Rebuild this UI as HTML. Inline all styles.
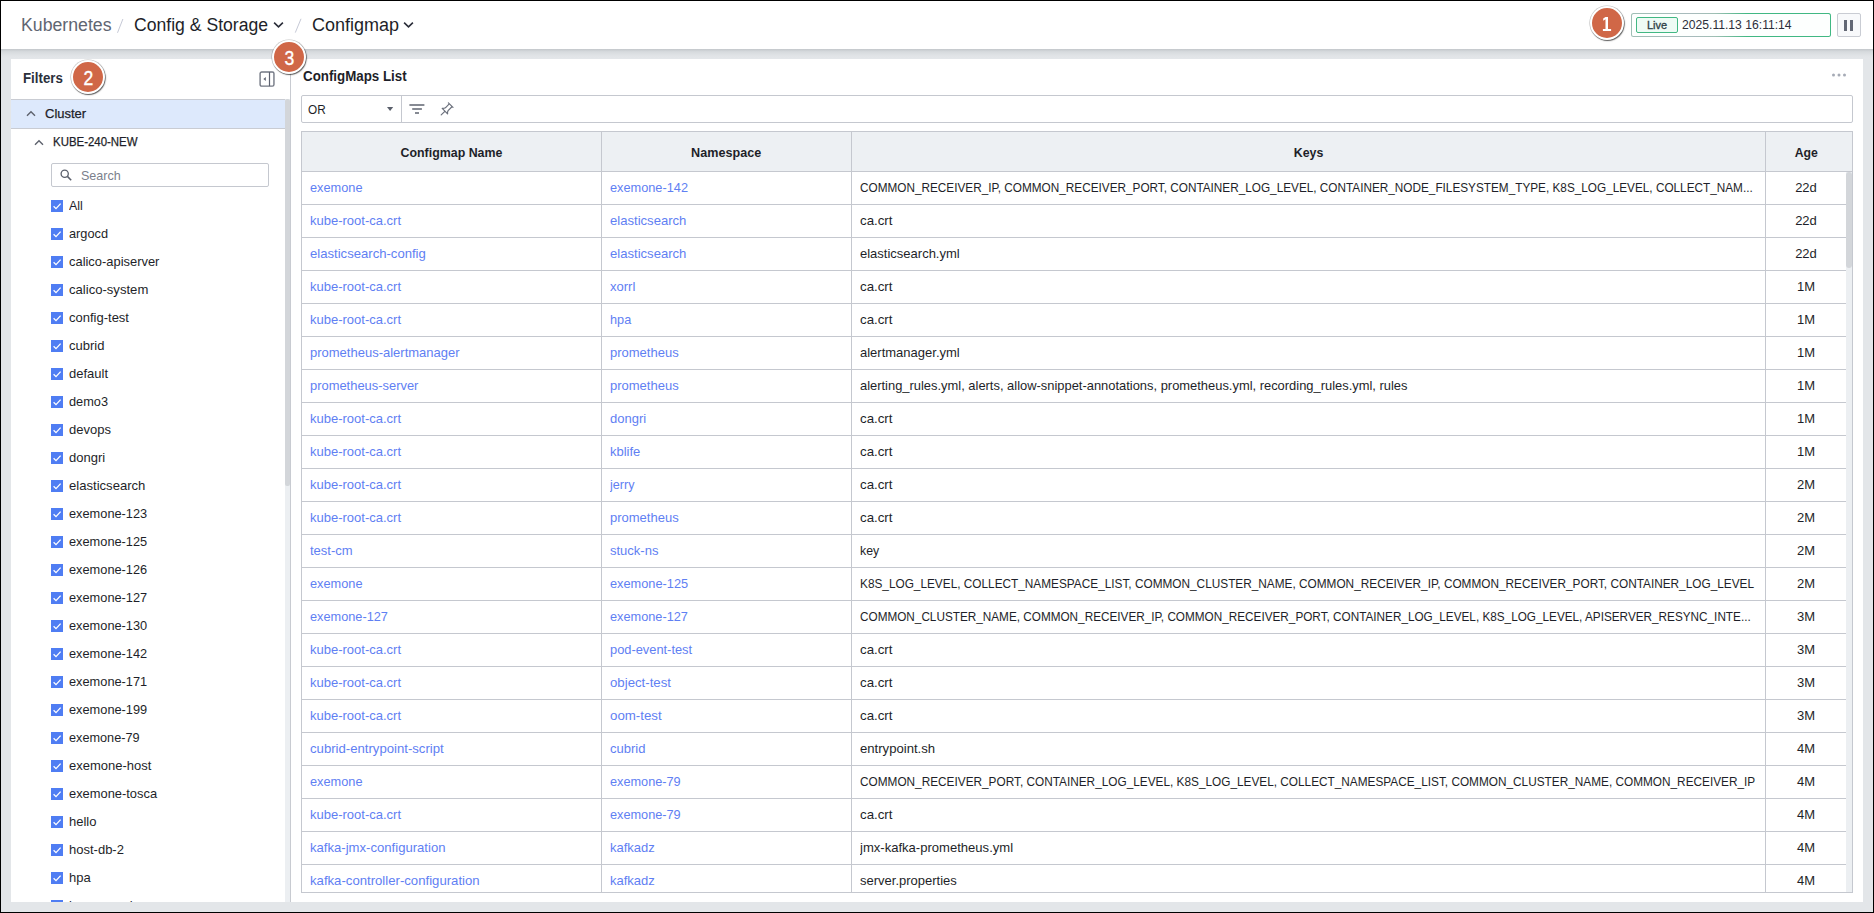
<!DOCTYPE html>
<html>
<head>
<meta charset="utf-8">
<title>Configmap</title>
<style>
*{box-sizing:border-box;margin:0;padding:0}
html,body{width:1874px;height:913px;overflow:hidden;background:#000}
body{font-family:"Liberation Sans",sans-serif;color:#1e1f29;position:relative}
.abs{position:absolute}
#page{left:1px;top:1px;width:1872px;height:911px;background:#e3e6e9;overflow:hidden}
#hdr{left:0;top:0;width:1872px;height:48px;background:#fff}
#hshadow{left:0;top:48px;width:1872px;height:9px;background:linear-gradient(#c3c7cb 0,#d6dadd 30%,#e0e3e6 70%,#e3e6e9 100%)}
.bc{top:0;height:48px;line-height:48px;font-size:18px;white-space:nowrap}
.bc.g{color:#5f6672}
.bc.sl{color:#c3c6d4}
#panel{left:10px;top:58px;width:1852px;height:843px;background:#fff;overflow:hidden}
.badge{width:34px;height:34px;border-radius:50%;background:#d06747;border:2px solid #fff;box-shadow:0 0 0 .6px rgba(0,0,0,.22),0.7px 1px 1.2px rgba(0,0,0,.6);color:#fff;font-size:19.5px;font-weight:400;text-align:center;line-height:33px;z-index:5;-webkit-text-stroke:0.35px #fff}
.badge span{display:inline-block;transform:scaleX(.9)}
.badge svg{position:absolute;left:-2px;top:-2px}
/* live */
#live{left:1630px;top:12px;width:200px;height:24px;border-radius:2.5px;background:linear-gradient(90deg,#9fbeb5 0,#a8bbbc 30%,#9fbfb4 42%,#41b883 58%)}
#livebg{left:1px;top:1px;width:198px;height:22px;border-radius:1.5px;background:#fdfffe}
#livetag{left:5px;top:4px;width:42px;height:16px;border:1px solid #41b883;border-radius:2px;background:#eefbf5;font-size:11px;line-height:14px;text-align:center;color:#2d3f46;-webkit-text-stroke:0.3px #2d3f46}
#livetime{left:51px;top:1px;height:22px;line-height:22px;font-size:12px;color:#2b2e3a;white-space:nowrap}
#pause{left:1836px;top:12px;width:24px;height:24px;border:1px solid #c9ccd3;border-radius:2px;background:#f8f9fb}
#pause i{position:absolute;top:6px;width:3px;height:11px;background:#636875}
/* left */
#filters{left:12px;top:10px;font-size:14px;font-weight:bold;line-height:18px;color:#2b303b}
#cluster{left:0;top:40px;width:274px;height:30px;background:#ddE9fc;border-top:1px solid #c9ccd3;border-bottom:1px solid #c9ccd3}
#cluster span{position:absolute;left:34px;top:0;line-height:28px;font-size:13px;color:#1e1f29;-webkit-text-stroke:0.25px #1e1f29}
#kube{left:42px;top:74px;font-size:12px;line-height:18px;color:#1e1f29;-webkit-text-stroke:0.25px #1e1f29}
#search{left:40px;top:104px;width:218px;height:24px;border:1px solid #c5c8cf;border-radius:2px;background:#fff}
#search span{position:absolute;left:29px;top:1px;transform-origin:0 50%;transform:scaleX(.965);line-height:22px;font-size:13px;color:#7b808c}
.ck{position:absolute;left:40px;width:12px;height:12px;background:#4f7df3}
.ck svg{position:absolute;left:0;top:0}
.lb{position:absolute;left:58px;font-size:13px;line-height:16px;white-space:nowrap;color:#1e1f29}
#lsb{left:274px;top:40px;width:5px;height:803px;background:#eceff2}
#lsbt{left:274px;top:40px;width:5px;height:387px;background:#d3d6da;border-radius:2px}
#vdiv{left:279px;top:0;width:1px;height:843px;background:#c8cbd1}
/* right */
#title{left:292px;top:8px;font-size:14px;font-weight:bold;line-height:18px;color:#1e1f29;white-space:nowrap}
#fbar{left:290px;top:36px;width:1552px;height:28px;border:1px solid #c5c8cf;border-radius:2px;background:#fff}
#fbar .sep{position:absolute;left:99px;top:0;width:1px;height:26px;background:#c5c8cf}
#fbar .or{position:absolute;left:5.5px;top:1px;line-height:26px;font-size:12px;color:#1e1f29}
#tbl{left:290px;top:72px;width:1552px;height:762px;border:1px solid #c5c8cf;overflow:hidden;background:#fff}
#thead{left:0;top:0;width:1550px;height:40px;background:#edf0f3;border-bottom:1px solid #c5c8cf}
.th{position:absolute;top:1px;height:39px;line-height:40px;font-size:13px;font-weight:bold;text-align:center;color:#1e1f29}
.vl{position:absolute;top:0;width:1px;height:760px;background:#c5c8cf}
.row{position:absolute;left:0;width:1544px;height:33px;border-bottom:1px solid #c5c8cf}
.c{position:absolute;top:0;height:32px;line-height:32px;font-size:13px;white-space:nowrap;overflow:hidden}
.c1{left:8px;width:285px;color:#5f80f3}
.c2{left:308px;width:235px;color:#5f80f3}
.c3{left:558px;width:900px;color:#1e1f29}
.c4{left:1464px;width:80px;text-align:center;color:#1e1f29}
#rsb{left:1544px;top:40px;width:6px;height:720px;background:#eceff2}
#rsbt{left:1544px;top:40px;width:6px;height:96px;background:#d3d6da;border-radius:3px}

.sx{display:inline-block;transform-origin:0 50%}
#h1s{display:inline-block;transform-origin:0 50%;transform:scaleX(.9835)}
#h2s{display:inline-block;transform-origin:0 50%;transform:scaleX(.978)}
#h3s{display:inline-block;transform-origin:0 50%;transform:scaleX(1.0)}
#filters{transform-origin:0 50%;transform:scaleX(.95)}
#title{transform-origin:0 50%;transform:scaleX(.952)}
#kube{transform-origin:0 50%;transform:scaleX(.953)}
#th0,#th1,#th2,#th3{display:inline-block;transform-origin:50% 50%}
#th0{transform:scaleX(.952)}#th1{transform:scaleX(.969)}#th2{transform:scaleX(.952)}#th3{transform:scaleX(.942)}
#fbar .or{transform-origin:0 50%;transform:scaleX(.98)}
#livetime{transform-origin:0 50%;transform:scaleX(1.012)}
</style>
</head>
<body>
<div id="page" class="abs">
  <div id="hdr" class="abs"></div>
  <div id="hshadow" class="abs"></div>
  <div class="abs bc g" id="h1" style="left:20px"><span id="h1s">Kubernetes</span></div>
  <svg class="abs" style="left:115px;top:16px" width="10" height="18" viewBox="0 0 10 18"><path d="M1.5 15.8 L6.9 2" stroke="#c6c9d6" stroke-width="1" fill="none"/></svg>
  <div class="abs bc" id="h2" style="left:133px"><span id="h2s">Config &amp; Storage</span></div>
  <svg class="abs" id="ch1" style="left:271.5px;top:20px" width="11" height="8" viewBox="0 0 11 8"><path d="M1.1 1.6 L5.5 5.9 L9.9 1.6" fill="none" stroke="#2b2e3a" stroke-width="1.6"/></svg>
  <svg class="abs" style="left:293px;top:16px" width="10" height="18" viewBox="0 0 10 18"><path d="M1.3 15.6 L7 1.8" stroke="#c6c9d6" stroke-width="1" fill="none"/></svg>
  <div class="abs bc" id="h3" style="left:311px"><span id="h3s">Configmap</span></div>
  <svg class="abs" id="ch2" style="left:402px;top:20px" width="11" height="8" viewBox="0 0 11 8"><path d="M1.1 1.6 L5.5 5.9 L9.9 1.6" fill="none" stroke="#2b2e3a" stroke-width="1.6"/></svg>

  <div class="abs badge" style="left:1589px;top:5px"><svg width="34" height="34" viewBox="0 0 34 34"><path d="M15.5 10.9 H18 V23 H21.1 V25 H12.9 V23 H15.5 V13.3 L13.2 14.7 V12.6 Z" fill="#fff"/></svg></div>
  <div id="live" class="abs">
    <div id="livebg" class="abs"></div>
    <div id="livetag" class="abs">Live</div>
    <div id="livetime" class="abs">2025.11.13 16:11:14</div>
  </div>
  <div id="pause" class="abs"><i style="left:6px"></i><i style="left:12px"></i></div>

  <div class="abs badge" style="left:70px;top:59px"><span>2</span></div>
  <div class="abs badge" style="left:271px;top:39px"><span>3</span></div>

  <div id="panel" class="abs">
    <div id="filters" class="abs">Filters</div>
<svg class="abs" id="collapse" style="left:248px;top:12px" width="16" height="16" viewBox="0 0 16 16"><rect x="1.1" y="1" width="13.85" height="14.1" rx="1.6" fill="none" stroke="#737884" stroke-width="1.4"/><path d="M10.5 1 V15.1" stroke="#5d6270" stroke-width="1.2"/><path d="M4.4 8 L6.8 5.9 V10.1 Z" fill="#5d6270"/></svg>
<div id="cluster" class="abs"><svg class="abs" style="left:15px;top:10px" width="10" height="7" viewBox="0 0 10 7"><path d="M1 5.8 L5 1.8 L9 5.8" fill="none" stroke="#5c616c" stroke-width="1.4"/></svg><span>Cluster</span></div>
<svg class="abs" style="left:23px;top:80px" width="10" height="7" viewBox="0 0 10 7"><path d="M1 5.8 L5 1.8 L9 5.8" fill="none" stroke="#5c616c" stroke-width="1.4"/></svg>
<div id="kube" class="abs">KUBE-240-NEW</div>
<div id="search" class="abs"><svg class="abs" style="left:7px;top:4px" width="14" height="14" viewBox="0 0 14 14"><circle cx="5.7" cy="5.7" r="3.6" fill="none" stroke="#5a5f6b" stroke-width="1.3"/><path d="M8.4 8.4 L12.2 12.2" stroke="#5a5f6b" stroke-width="1.5"/></svg><span>Search</span></div>
<div class="ck" style="top:141px"><svg width="12" height="12" viewBox="0 0 12 12"><path d="M2.6 6.3 L5 8.6 L9.6 3.6" fill="none" stroke="#fff" stroke-width="1.3"/></svg></div><div class="lb" style="top:139px"><span id="l0" style="display:inline-block;transform-origin:0 50%;transform:scaleX(0.955)">All</span></div>
<div class="ck" style="top:169px"><svg width="12" height="12" viewBox="0 0 12 12"><path d="M2.6 6.3 L5 8.6 L9.6 3.6" fill="none" stroke="#fff" stroke-width="1.3"/></svg></div><div class="lb" style="top:167px"><span id="l1" style="display:inline-block;transform-origin:0 50%;transform:scaleX(0.9811)">argocd</span></div>
<div class="ck" style="top:197px"><svg width="12" height="12" viewBox="0 0 12 12"><path d="M2.6 6.3 L5 8.6 L9.6 3.6" fill="none" stroke="#fff" stroke-width="1.3"/></svg></div><div class="lb" style="top:195px"><span id="l2" style="display:inline-block;transform-origin:0 50%;transform:scaleX(0.9929)">calico-apiserver</span></div>
<div class="ck" style="top:225px"><svg width="12" height="12" viewBox="0 0 12 12"><path d="M2.6 6.3 L5 8.6 L9.6 3.6" fill="none" stroke="#fff" stroke-width="1.3"/></svg></div><div class="lb" style="top:223px"><span id="l3" style="display:inline-block;transform-origin:0 50%;transform:scaleX(1.007)">calico-system</span></div>
<div class="ck" style="top:253px"><svg width="12" height="12" viewBox="0 0 12 12"><path d="M2.6 6.3 L5 8.6 L9.6 3.6" fill="none" stroke="#fff" stroke-width="1.3"/></svg></div><div class="lb" style="top:251px"><span id="l4">config-test</span></div>
<div class="ck" style="top:281px"><svg width="12" height="12" viewBox="0 0 12 12"><path d="M2.6 6.3 L5 8.6 L9.6 3.6" fill="none" stroke="#fff" stroke-width="1.3"/></svg></div><div class="lb" style="top:279px"><span id="l5">cubrid</span></div>
<div class="ck" style="top:309px"><svg width="12" height="12" viewBox="0 0 12 12"><path d="M2.6 6.3 L5 8.6 L9.6 3.6" fill="none" stroke="#fff" stroke-width="1.3"/></svg></div><div class="lb" style="top:307px"><span id="l6">default</span></div>
<div class="ck" style="top:337px"><svg width="12" height="12" viewBox="0 0 12 12"><path d="M2.6 6.3 L5 8.6 L9.6 3.6" fill="none" stroke="#fff" stroke-width="1.3"/></svg></div><div class="lb" style="top:335px"><span id="l7" style="display:inline-block;transform-origin:0 50%;transform:scaleX(0.9811)">demo3</span></div>
<div class="ck" style="top:365px"><svg width="12" height="12" viewBox="0 0 12 12"><path d="M2.6 6.3 L5 8.6 L9.6 3.6" fill="none" stroke="#fff" stroke-width="1.3"/></svg></div><div class="lb" style="top:363px"><span id="l8">devops</span></div>
<div class="ck" style="top:393px"><svg width="12" height="12" viewBox="0 0 12 12"><path d="M2.6 6.3 L5 8.6 L9.6 3.6" fill="none" stroke="#fff" stroke-width="1.3"/></svg></div><div class="lb" style="top:391px"><span id="l9">dongri</span></div>
<div class="ck" style="top:421px"><svg width="12" height="12" viewBox="0 0 12 12"><path d="M2.6 6.3 L5 8.6 L9.6 3.6" fill="none" stroke="#fff" stroke-width="1.3"/></svg></div><div class="lb" style="top:419px"><span id="l10" style="display:inline-block;transform-origin:0 50%;transform:scaleX(1.0069)">elasticsearch</span></div>
<div class="ck" style="top:449px"><svg width="12" height="12" viewBox="0 0 12 12"><path d="M2.6 6.3 L5 8.6 L9.6 3.6" fill="none" stroke="#fff" stroke-width="1.3"/></svg></div><div class="lb" style="top:447px"><span id="l11" style="display:inline-block;transform-origin:0 50%;transform:scaleX(0.9836)">exemone-123</span></div>
<div class="ck" style="top:477px"><svg width="12" height="12" viewBox="0 0 12 12"><path d="M2.6 6.3 L5 8.6 L9.6 3.6" fill="none" stroke="#fff" stroke-width="1.3"/></svg></div><div class="lb" style="top:475px"><span id="l12" style="display:inline-block;transform-origin:0 50%;transform:scaleX(0.9836)">exemone-125</span></div>
<div class="ck" style="top:505px"><svg width="12" height="12" viewBox="0 0 12 12"><path d="M2.6 6.3 L5 8.6 L9.6 3.6" fill="none" stroke="#fff" stroke-width="1.3"/></svg></div><div class="lb" style="top:503px"><span id="l13" style="display:inline-block;transform-origin:0 50%;transform:scaleX(0.9836)">exemone-126</span></div>
<div class="ck" style="top:533px"><svg width="12" height="12" viewBox="0 0 12 12"><path d="M2.6 6.3 L5 8.6 L9.6 3.6" fill="none" stroke="#fff" stroke-width="1.3"/></svg></div><div class="lb" style="top:531px"><span id="l14" style="display:inline-block;transform-origin:0 50%;transform:scaleX(0.9836)">exemone-127</span></div>
<div class="ck" style="top:561px"><svg width="12" height="12" viewBox="0 0 12 12"><path d="M2.6 6.3 L5 8.6 L9.6 3.6" fill="none" stroke="#fff" stroke-width="1.3"/></svg></div><div class="lb" style="top:559px"><span id="l15" style="display:inline-block;transform-origin:0 50%;transform:scaleX(0.9836)">exemone-130</span></div>
<div class="ck" style="top:589px"><svg width="12" height="12" viewBox="0 0 12 12"><path d="M2.6 6.3 L5 8.6 L9.6 3.6" fill="none" stroke="#fff" stroke-width="1.3"/></svg></div><div class="lb" style="top:587px"><span id="l16" style="display:inline-block;transform-origin:0 50%;transform:scaleX(0.9836)">exemone-142</span></div>
<div class="ck" style="top:617px"><svg width="12" height="12" viewBox="0 0 12 12"><path d="M2.6 6.3 L5 8.6 L9.6 3.6" fill="none" stroke="#fff" stroke-width="1.3"/></svg></div><div class="lb" style="top:615px"><span id="l17" style="display:inline-block;transform-origin:0 50%;transform:scaleX(0.9836)">exemone-171</span></div>
<div class="ck" style="top:645px"><svg width="12" height="12" viewBox="0 0 12 12"><path d="M2.6 6.3 L5 8.6 L9.6 3.6" fill="none" stroke="#fff" stroke-width="1.3"/></svg></div><div class="lb" style="top:643px"><span id="l18" style="display:inline-block;transform-origin:0 50%;transform:scaleX(0.9836)">exemone-199</span></div>
<div class="ck" style="top:673px"><svg width="12" height="12" viewBox="0 0 12 12"><path d="M2.6 6.3 L5 8.6 L9.6 3.6" fill="none" stroke="#fff" stroke-width="1.3"/></svg></div><div class="lb" style="top:671px"><span id="l19" style="display:inline-block;transform-origin:0 50%;transform:scaleX(0.9768)">exemone-79</span></div>
<div class="ck" style="top:701px"><svg width="12" height="12" viewBox="0 0 12 12"><path d="M2.6 6.3 L5 8.6 L9.6 3.6" fill="none" stroke="#fff" stroke-width="1.3"/></svg></div><div class="lb" style="top:699px"><span id="l20">exemone-host</span></div>
<div class="ck" style="top:729px"><svg width="12" height="12" viewBox="0 0 12 12"><path d="M2.6 6.3 L5 8.6 L9.6 3.6" fill="none" stroke="#fff" stroke-width="1.3"/></svg></div><div class="lb" style="top:727px"><span id="l21" style="display:inline-block;transform-origin:0 50%;transform:scaleX(0.9911)">exemone-tosca</span></div>
<div class="ck" style="top:757px"><svg width="12" height="12" viewBox="0 0 12 12"><path d="M2.6 6.3 L5 8.6 L9.6 3.6" fill="none" stroke="#fff" stroke-width="1.3"/></svg></div><div class="lb" style="top:755px"><span id="l22">hello</span></div>
<div class="ck" style="top:785px"><svg width="12" height="12" viewBox="0 0 12 12"><path d="M2.6 6.3 L5 8.6 L9.6 3.6" fill="none" stroke="#fff" stroke-width="1.3"/></svg></div><div class="lb" style="top:783px"><span id="l23">host-db-2</span></div>
<div class="ck" style="top:813px"><svg width="12" height="12" viewBox="0 0 12 12"><path d="M2.6 6.3 L5 8.6 L9.6 3.6" fill="none" stroke="#fff" stroke-width="1.3"/></svg></div><div class="lb" style="top:811px"><span id="l24">hpa</span></div>
<div class="ck" style="top:841px"><svg width="12" height="12" viewBox="0 0 12 12"><path d="M2.6 6.3 L5 8.6 L9.6 3.6" fill="none" stroke="#fff" stroke-width="1.3"/></svg></div><div class="lb" style="top:839px"><span id="l25">ingress-nginx</span></div>
<div id="lsb" class="abs"></div><div id="lsbt" class="abs"></div><div id="vdiv" class="abs"></div>
    <div id="title" class="abs">ConfigMaps List</div>
<svg class="abs" style="left:1820px;top:14px" width="16" height="4" viewBox="0 0 16 4"><circle cx="2.5" cy="2" r="1.5" fill="#a6abb6"/><circle cx="8" cy="2" r="1.5" fill="#a6abb6"/><circle cx="13.5" cy="2" r="1.5" fill="#a6abb6"/></svg>
<div id="fbar" class="abs"><div class="or">OR</div><svg class="abs" style="left:85px;top:11px" width="7" height="5" viewBox="0 0 7 5"><path d="M0 0 H6.2 L3.1 4 Z" fill="#5a5f6b"/></svg><div class="sep"></div><svg class="abs" style="left:107px;top:8px" width="16" height="11" viewBox="0 0 16 11"><path d="M0.4 1 H15.4 M3.2 5 H12.9 M6 9 H10" stroke="#5f6470" stroke-width="1.7" fill="none"/></svg><svg class="abs" style="left:138px;top:6px" width="14" height="14" viewBox="0 0 14 14"><path d="M8.4 0.9 L13 5.4 M9 2.2 L5.4 5.8 Q4 6.6 2.2 6.4 L7.6 11.8 Q7.2 10 8.1 8.6 L11.7 5 M4.6 9.6 L1.2 12.9" fill="none" stroke="#6b707c" stroke-width="1.2" stroke-linecap="round" stroke-linejoin="round"/></svg></div>
<div id="tbl" class="abs"><div id="thead" class="abs"></div>
<div class="th" style="left:0;width:299px"><span id="th0">Configmap Name</span></div>
<div class="th" style="left:300px;width:249px"><span id="th1">Namespace</span></div>
<div class="th" style="left:550px;width:913px"><span id="th2">Keys</span></div>
<div class="th" style="left:1464px;width:80px"><span id="th3">Age</span></div>
<div class="row" style="top:40px"><div class="c c1"><span id="a0" style="display:inline-block;transform-origin:0 50%;transform:scaleX(0.9817)">exemone</span></div><div class="c c2"><span id="b0" style="display:inline-block;transform-origin:0 50%;transform:scaleX(0.9811)">exemone-142</span></div><div class="c c3"><span id="k0" style="display:inline-block;transform-origin:0 50%;transform:scaleX(0.9055)">COMMON_RECEIVER_IP, COMMON_RECEIVER_PORT, CONTAINER_LOG_LEVEL, CONTAINER_NODE_FILESYSTEM_TYPE, K8S_LOG_LEVEL, COLLECT_NAM...</span></div><div class="c c4"><span id="g0">22d</span></div></div>
<div class="row" style="top:73px"><div class="c c1"><span id="a1">kube-root-ca.crt</span></div><div class="c c2"><span id="b1" style="display:inline-block;transform-origin:0 50%;transform:scaleX(1.0069)">elasticsearch</span></div><div class="c c3"><span id="k1" style="display:inline-block;transform-origin:0 50%;transform:scaleX(1.022)">ca.crt</span></div><div class="c c4"><span id="g1">22d</span></div></div>
<div class="row" style="top:106px"><div class="c c1"><span id="a2" style="display:inline-block;transform-origin:0 50%;transform:scaleX(1.0079)">elasticsearch-config</span></div><div class="c c2"><span id="b2" style="display:inline-block;transform-origin:0 50%;transform:scaleX(1.0069)">elasticsearch</span></div><div class="c c3"><span id="k2">elasticsearch.yml</span></div><div class="c c4"><span id="g2">22d</span></div></div>
<div class="row" style="top:139px"><div class="c c1"><span id="a3">kube-root-ca.crt</span></div><div class="c c2"><span id="b3">xorrl</span></div><div class="c c3"><span id="k3" style="display:inline-block;transform-origin:0 50%;transform:scaleX(1.022)">ca.crt</span></div><div class="c c4"><span id="g3">1M</span></div></div>
<div class="row" style="top:172px"><div class="c c1"><span id="a4">kube-root-ca.crt</span></div><div class="c c2"><span id="b4" style="display:inline-block;transform-origin:0 50%;transform:scaleX(0.977)">hpa</span></div><div class="c c3"><span id="k4" style="display:inline-block;transform-origin:0 50%;transform:scaleX(1.022)">ca.crt</span></div><div class="c c4"><span id="g4">1M</span></div></div>
<div class="row" style="top:205px"><div class="c c1"><span id="a5">prometheus-alertmanager</span></div><div class="c c2"><span id="b5">prometheus</span></div><div class="c c3"><span id="k5">alertmanager.yml</span></div><div class="c c4"><span id="g5">1M</span></div></div>
<div class="row" style="top:238px"><div class="c c1"><span id="a6" style="display:inline-block;transform-origin:0 50%;transform:scaleX(0.9935)">prometheus-server</span></div><div class="c c2"><span id="b6">prometheus</span></div><div class="c c3"><span id="k6" style="display:inline-block;transform-origin:0 50%;transform:scaleX(0.9931)">alerting_rules.yml, alerts, allow-snippet-annotations, prometheus.yml, recording_rules.yml, rules</span></div><div class="c c4"><span id="g6">1M</span></div></div>
<div class="row" style="top:271px"><div class="c c1"><span id="a7">kube-root-ca.crt</span></div><div class="c c2"><span id="b7">dongri</span></div><div class="c c3"><span id="k7" style="display:inline-block;transform-origin:0 50%;transform:scaleX(1.022)">ca.crt</span></div><div class="c c4"><span id="g7">1M</span></div></div>
<div class="row" style="top:304px"><div class="c c1"><span id="a8">kube-root-ca.crt</span></div><div class="c c2"><span id="b8">kblife</span></div><div class="c c3"><span id="k8" style="display:inline-block;transform-origin:0 50%;transform:scaleX(1.022)">ca.crt</span></div><div class="c c4"><span id="g8">1M</span></div></div>
<div class="row" style="top:337px"><div class="c c1"><span id="a9">kube-root-ca.crt</span></div><div class="c c2"><span id="b9" style="display:inline-block;transform-origin:0 50%;transform:scaleX(0.9691)">jerry</span></div><div class="c c3"><span id="k9" style="display:inline-block;transform-origin:0 50%;transform:scaleX(1.022)">ca.crt</span></div><div class="c c4"><span id="g9">2M</span></div></div>
<div class="row" style="top:370px"><div class="c c1"><span id="a10">kube-root-ca.crt</span></div><div class="c c2"><span id="b10">prometheus</span></div><div class="c c3"><span id="k10" style="display:inline-block;transform-origin:0 50%;transform:scaleX(1.022)">ca.crt</span></div><div class="c c4"><span id="g10">2M</span></div></div>
<div class="row" style="top:403px"><div class="c c1"><span id="a11">test-cm</span></div><div class="c c2"><span id="b11">stuck-ns</span></div><div class="c c3"><span id="k11" style="display:inline-block;transform-origin:0 50%;transform:scaleX(0.9491)">key</span></div><div class="c c4"><span id="g11">2M</span></div></div>
<div class="row" style="top:436px"><div class="c c1"><span id="a12" style="display:inline-block;transform-origin:0 50%;transform:scaleX(0.9817)">exemone</span></div><div class="c c2"><span id="b12" style="display:inline-block;transform-origin:0 50%;transform:scaleX(0.9824)">exemone-125</span></div><div class="c c3"><span id="k12" style="display:inline-block;transform-origin:0 50%;transform:scaleX(0.9088)">K8S_LOG_LEVEL, COLLECT_NAMESPACE_LIST, COMMON_CLUSTER_NAME, COMMON_RECEIVER_IP, COMMON_RECEIVER_PORT, CONTAINER_LOG_LEVEL</span></div><div class="c c4"><span id="g12">2M</span></div></div>
<div class="row" style="top:469px"><div class="c c1"><span id="a13" style="display:inline-block;transform-origin:0 50%;transform:scaleX(0.9799)">exemone-127</span></div><div class="c c2"><span id="b13" style="display:inline-block;transform-origin:0 50%;transform:scaleX(0.9799)">exemone-127</span></div><div class="c c3"><span id="k13" style="display:inline-block;transform-origin:0 50%;transform:scaleX(0.9041)">COMMON_CLUSTER_NAME, COMMON_RECEIVER_IP, COMMON_RECEIVER_PORT, CONTAINER_LOG_LEVEL, K8S_LOG_LEVEL, APISERVER_RESYNC_INTE...</span></div><div class="c c4"><span id="g13">3M</span></div></div>
<div class="row" style="top:502px"><div class="c c1"><span id="a14">kube-root-ca.crt</span></div><div class="c c2"><span id="b14" style="display:inline-block;transform-origin:0 50%;transform:scaleX(0.9878)">pod-event-test</span></div><div class="c c3"><span id="k14" style="display:inline-block;transform-origin:0 50%;transform:scaleX(1.022)">ca.crt</span></div><div class="c c4"><span id="g14">3M</span></div></div>
<div class="row" style="top:535px"><div class="c c1"><span id="a15">kube-root-ca.crt</span></div><div class="c c2"><span id="b15" style="display:inline-block;transform-origin:0 50%;transform:scaleX(1.017)">object-test</span></div><div class="c c3"><span id="k15" style="display:inline-block;transform-origin:0 50%;transform:scaleX(1.022)">ca.crt</span></div><div class="c c4"><span id="g15">3M</span></div></div>
<div class="row" style="top:568px"><div class="c c1"><span id="a16">kube-root-ca.crt</span></div><div class="c c2"><span id="b16" style="display:inline-block;transform-origin:0 50%;transform:scaleX(1.0221)">oom-test</span></div><div class="c c3"><span id="k16" style="display:inline-block;transform-origin:0 50%;transform:scaleX(1.022)">ca.crt</span></div><div class="c c4"><span id="g16">3M</span></div></div>
<div class="row" style="top:601px"><div class="c c1"><span id="a17" style="display:inline-block;transform-origin:0 50%;transform:scaleX(1.0112)">cubrid-entrypoint-script</span></div><div class="c c2"><span id="b17">cubrid</span></div><div class="c c3"><span id="k17" style="display:inline-block;transform-origin:0 50%;transform:scaleX(1.0089)">entrypoint.sh</span></div><div class="c c4"><span id="g17">4M</span></div></div>
<div class="row" style="top:634px"><div class="c c1"><span id="a18" style="display:inline-block;transform-origin:0 50%;transform:scaleX(0.9817)">exemone</span></div><div class="c c2"><span id="b18" style="display:inline-block;transform-origin:0 50%;transform:scaleX(0.9781)">exemone-79</span></div><div class="c c3"><span id="k18" style="display:inline-block;transform-origin:0 50%;transform:scaleX(0.9085)">COMMON_RECEIVER_PORT, CONTAINER_LOG_LEVEL, K8S_LOG_LEVEL, COLLECT_NAMESPACE_LIST, COMMON_CLUSTER_NAME, COMMON_RECEIVER_IP</span></div><div class="c c4"><span id="g18">4M</span></div></div>
<div class="row" style="top:667px"><div class="c c1"><span id="a19">kube-root-ca.crt</span></div><div class="c c2"><span id="b19" style="display:inline-block;transform-origin:0 50%;transform:scaleX(0.9781)">exemone-79</span></div><div class="c c3"><span id="k19" style="display:inline-block;transform-origin:0 50%;transform:scaleX(1.022)">ca.crt</span></div><div class="c c4"><span id="g19">4M</span></div></div>
<div class="row" style="top:700px"><div class="c c1"><span id="a20" style="display:inline-block;transform-origin:0 50%;transform:scaleX(1.0083)">kafka-jmx-configuration</span></div><div class="c c2"><span id="b20">kafkadz</span></div><div class="c c3"><span id="k20" style="display:inline-block;transform-origin:0 50%;transform:scaleX(1.0043)">jmx-kafka-prometheus.yml</span></div><div class="c c4"><span id="g20">4M</span></div></div>
<div class="row" style="top:733px"><div class="c c1"><span id="a21" style="display:inline-block;transform-origin:0 50%;transform:scaleX(1.0117)">kafka-controller-configuration</span></div><div class="c c2"><span id="b21">kafkadz</span></div><div class="c c3"><span id="k21">server.properties</span></div><div class="c c4"><span id="g21">4M</span></div></div>
<div class="vl" style="left:299px"></div>
<div class="vl" style="left:549px"></div>
<div class="vl" style="left:1463px"></div>
<div id="rsb" class="abs"></div><div id="rsbt" class="abs"></div></div>
  </div>
</div>
</body>
</html>
